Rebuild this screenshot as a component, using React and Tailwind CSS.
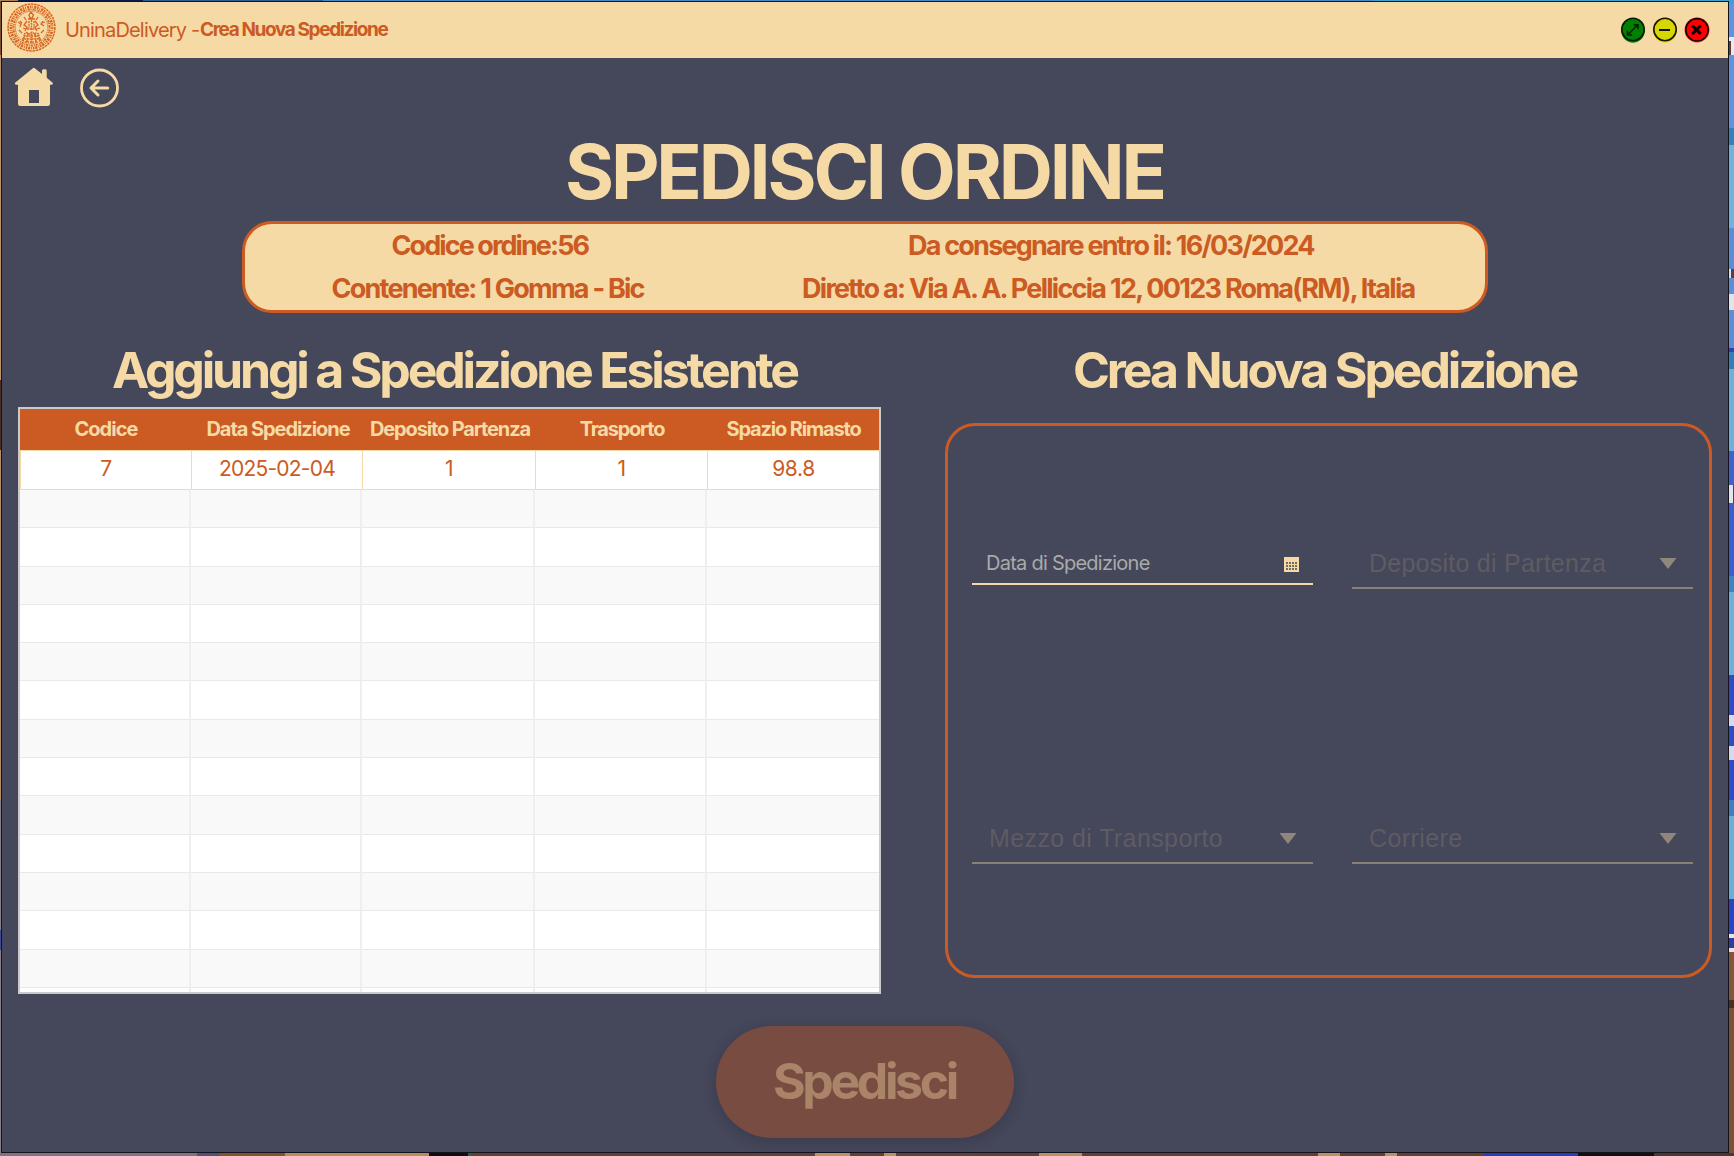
import React from "react";

const columns = ["Codice", "Data Spedizione", "Deposito Partenza", "Trasporto", "Spazio Rimasto"];
const headTracking = [
  "tracking-[-0.95px]",
  "tracking-[-1.06px]",
  "tracking-[-1.15px]",
  "tracking-[-1.23px]",
  "tracking-[-1.17px]",
];
const values = ["7", "2025-02-04", "1", "1", "98.8"];

function Seal() {
  return (
    <svg className="h-[49px] w-[49px]" viewBox="0 0 49 49" fill="none" stroke="#d9641f">
      <circle cx="24.5" cy="24.5" r="23.4" strokeWidth="1.5" strokeDasharray="2.6 0.7" />
      <circle cx="24.5" cy="24.5" r="20.6" strokeWidth="2.8" strokeDasharray="1.5 0.9 0.8 1.1 2.2 0.8" />
      <circle cx="24.5" cy="24.5" r="18" strokeWidth="2" strokeDasharray="1 1.1 2.1 0.7" />
      <circle cx="24.5" cy="24.5" r="16.2" strokeWidth="0.9" strokeDasharray="1.6 0.7" />
      <g strokeWidth="1.3">
        <path d="M22 12l2-3 2.500 3-1.500 3h-2zM21 16h7M20 18l-3 4 3 2-2 4M28 18l3 4-3 2 2 4" />
        <path d="M22 18v7M24.500 17v10M27 18v7M20 26h9M19 29l3 2 3-2 3 2 2-2" strokeDasharray="2 0.7" />
        <path d="M16 38l2-8M20 39l1-9M24.500 40V30M29 39l-1-9M33 38l-2-8" strokeDasharray="1.800 0.6" strokeWidth="1.900" />
        <path d="M15 36h19M17 33h15M18 39h13" strokeDasharray="1.500 1" />
        <path d="M11 19l3 2-1 3M13 18l2 2M36 18l-2 3 3 2M38 19l-3 1M12 27l3 3M37 27l-3 3" />
        <path d="M17 14l2 3M31 14l-2 3M16 25l3 1M33 25l-3 1" />
      </g>
    </svg>
  );
}

function HomeIcon() {
  return (
    <svg className="h-[40px] w-[40px]" viewBox="0 0 40 40" fill="#f6daa6">
      <path
        fillRule="evenodd"
        d="M18.800 1.300a1.500 1.500 0 0 1 2 0L28 7V3.700q0-1.500 1.500-1.500h1.700q1.500 0 1.500 1.500v7l5.700 4.800q1 1 .2 1.800-.4.500-1.600.5H36v19q0 2.200-2.300 2.200H6.300Q4 39 4 36.800v-19H2.500Q.9 17.800.9 16.500q0-.6.8-1.200zM15 23v13h10V23z"
      />
    </svg>
  );
}

function BackIcon() {
  return (
    <svg className="h-[40px] w-[40px]" viewBox="0 0 40 40" fill="none" stroke="#f6daa6" strokeLinecap="round" strokeLinejoin="round">
      <circle cx="20.500" cy="20" r="18" strokeWidth="2.800" />
      <path d="M28.700 20H12.300M19 13l-7 7 7 7" strokeWidth="3" />
    </svg>
  );
}

function WindowButtons() {
  return (
    <div className="flex gap-[6px]">
      <svg className="h-[26px] w-[26px]" viewBox="0 0 26 26">
        <circle cx="13" cy="14" r="11.700" fill="#0a8a0a" />
        <circle cx="13" cy="12.500" r="11.200" fill="#008000" stroke="#041a04" strokeWidth="1.600" />
        <path d="M8 17.500L17.500 8M13.500 7.700H18V12M7.500 13.500V18H12" fill="none" stroke="#031d03" strokeWidth="1.500" />
      </svg>
      <svg className="h-[26px] w-[26px]" viewBox="0 0 26 26">
        <circle cx="13" cy="14" r="11.700" fill="#e4e200" />
        <circle cx="13" cy="12.500" r="11.200" fill="#d6d600" stroke="#151500" strokeWidth="1.600" />
        <path d="M7 13H18" fill="none" stroke="#111" strokeWidth="2" />
      </svg>
      <svg className="h-[26px] w-[26px]" viewBox="0 0 26 26">
        <circle cx="13" cy="13" r="12.500" fill="#ff3030" />
        <circle cx="13" cy="12.800" r="11.200" fill="#ff0000" stroke="#1a0000" strokeWidth="1.600" />
        <path d="M8.200 8.500l8.600 8.600M16.800 8.500l-8.600 8.600" fill="none" stroke="#120000" strokeWidth="3" />
      </svg>
    </div>
  );
}

function CalendarIcon() {
  return (
    <svg className="h-[15px] w-[15px]" viewBox="0 0 15 15">
      <path d="M0 0h15v15H0z" fill="#f6daa6" />
      <path d="M2 6h11M2 9h11M2 12h11" stroke="#45475a" strokeWidth="1.500" strokeDasharray="2 1" />
    </svg>
  );
}

function Combo({ label, tracking }) {
  return (
    <div className="flex h-[56px] w-[341px] items-start justify-between border-b-2 border-[#8a8078] pl-[17px] pr-[16px] pt-[18px]">
      <span className={"font-['Liberation_Sans',sans-serif] text-[25px] leading-none whitespace-nowrap text-[#5e5c63] " + tracking}>{label}</span>
      <svg className="mt-[7px] h-[11px] w-[18px]" viewBox="0 0 18 11">
        <path d="M0.500 0h17L9 11z" fill="#91867b" />
      </svg>
    </div>
  );
}

function DesktopEdge() {
  return (
    <div className="flex w-[5px] flex-col overflow-hidden">
      <div className="h-[3px] bg-[#3f9fd0]" />
      <div className="h-[33px] bg-[#5c94de]" />
      <div className="h-[4px] bg-[#e6ecf5]" />
      <div className="ml-[2px] h-[14px] bg-[#e6ecf5]" />
      <div className="h-[73px] bg-[#5c94de]" />
      <div className="h-[17px] bg-[#2f84bd]" />
      <div className="h-[83px] bg-[#6cb3de]" />
      <div className="h-[41px] bg-[#5a8ed6]" />
      <div className="h-[9px] w-[2px] bg-[#d9dfeb]" />
      <div className="h-[16px] bg-[#5a8ed6]" />
      <div className="h-[16px] bg-[#dfe5ef]" />
      <div className="h-[38px] bg-[#5a8ed6]" />
      <div className="h-[4px] bg-[#2c46b8]" />
      <div className="h-[17px] bg-[#2f80bb]" />
      <div className="h-[82px] bg-[#6ab1dc]" />
      <div className="h-[34px] bg-[#3e62cf]" />
      <div className="h-[18px] w-[4px] bg-[#dfe5ef]" />
      <div className="h-[73px] bg-[#3a5ecf]" />
      <div className="h-[16px] bg-[#3a85c4]" />
      <div className="h-[83px] bg-[#6ab1dc]" />
      <div className="h-[40px] bg-[#2b4bc9]" />
      <div className="h-[11px] bg-[#d5dbea]" />
      <div className="h-[20px] bg-[#2b4bc9]" />
      <div className="h-[14px] bg-[#d5dbea]" />
      <div className="h-[40px] bg-[#2b4bc9]" />
      <div className="h-[16px] bg-[#3a80c2]" />
      <div className="h-[83px] bg-[#66b0dc]" />
      <div className="h-[35px] bg-[#2646c6]" />
      <div className="h-[4px] bg-[#e3e4ec]" />
      <div className="h-[10px] bg-[#2a3f9f]" />
      <div className="h-[4px] bg-[#e3e4ec]" />
      <div className="h-[48px] bg-[#80593a]" />
      <div className="h-[8px] bg-[#453225]" />
      <div className="grow bg-[#795338]" />
    </div>
  );
}

export default function App() {
  return (
    <div className="flex h-[1156px] w-[1734px] flex-col overflow-hidden bg-[#5b4033] font-['Inter',sans-serif]">
      <div className="flex h-px shrink-0">
        <div className="w-[18px] bg-[#a8805c]" />
        <div className="w-[125px] bg-[#0c1c4c]" />
        <div className="w-[180px] bg-[#2d5f96]" />
        <div className="w-[1050px] bg-[#4a87c9]" />
        <div className="grow bg-[#3f9fd0]" />
      </div>
      <div className="flex h-[1152px] shrink-0">
        <div className="flex w-px flex-col">
          <div className="h-[54px] bg-[#7a5038]" />
          <div className="h-[325px] bg-[#c19468]" />
          <div className="h-[70px] bg-[#4a3020]" />
          <div className="h-[350px] bg-[#b88c64]" />
          <div className="h-[130px] bg-[#8b7c8c]" />
          <div className="h-[20px] bg-[#3f4c94]" />
          <div className="grow bg-[#8b7c8c]" />
        </div>
        <div className="flex w-[1728px] flex-col border border-[#14151c] bg-[#45475a]">
          <header className="flex h-[56px] shrink-0 justify-between bg-[#f6daa6] text-[#cb5b22]">
            <div className="flex items-start pl-[5px]">
              <div className="pt-px">
                <Seal />
              </div>
              <span className="ml-[9px] mt-[18px] w-[135px] whitespace-nowrap text-[20px] font-normal leading-none tracking-[-0.83px]">
                UninaDelivery -
              </span>
              <span className="mt-[18px] whitespace-nowrap text-[19px] font-bold leading-none tracking-[-1.38px]">
                Crea Nuova Spedizione
              </span>
            </div>
            <div className="pr-[18px] pt-[15px]">
              <WindowButtons />
            </div>
          </header>

          <nav className="flex h-[76px] shrink-0 gap-[25px] pl-[12px] pt-[9px]">
            <HomeIcon />
            <div className="pt-[1px]">
              <BackIcon />
            </div>
          </nav>

          <h1 className="h-[75px] shrink-0 whitespace-nowrap pl-[563px] text-[75px] font-bold leading-none tracking-[-3.2px] text-[#f6daa6]">
            SPEDISCI ORDINE
          </h1>

          <section className="ml-[240px] mt-[12px] flex h-[92px] w-[1246px] shrink-0 rounded-[30px] border-3 border-[#cb5b22] bg-[#f6daa6] text-[27px] font-bold leading-none whitespace-nowrap text-[#cb5b22]">
            <div className="flex w-[556px] flex-col gap-[16px] pt-[8px]">
              <p className="pl-[146.500px] tracking-[-1.91px]">Codice ordine:56</p>
              <p className="pl-[86.500px] tracking-[-1.76px]">Contenente: 1 Gomma - Bic</p>
            </div>
            <div className="flex flex-col gap-[16px] pt-[8px]">
              <p className="pl-[107px] tracking-[-1.78px]">Da consegnare entro il: 16/03/2024</p>
              <p className="pl-px tracking-[-1.72px]">Diretto a: Via A. A. Pelliccia 12, 00123 Roma(RM), Italia</p>
            </div>
          </section>

          <main className="flex h-[681px] shrink-0 pt-[32px]">
            <section className="w-[943px] pl-[16px]">
              <h2 className="whitespace-nowrap pl-[94px] text-[50px] font-bold leading-none tracking-[-3.2px] text-[#f6daa6]">
                Aggiungi a Spedizione Esistente
              </h2>
              <div className="mt-[12px] flex h-[587px] w-[863px] flex-col overflow-hidden border-2 border-[#cacaca] bg-white">
                <div className="grid h-[41px] shrink-0 grid-cols-[172px_172px_172px_172px_1fr] bg-[#cb5b22] pt-[10px] text-center text-[20px] font-bold leading-none text-[#f6daa6]">
                  {columns.map((c, i) => (
                    <span key={c} className={"whitespace-nowrap " + headTracking[i]}>{c}</span>
                  ))}
                </div>
                <div className="grid h-[40px] shrink-0 grid-cols-[171px_171px_173px_172px_1fr] border-y border-l border-[#f6daa6] text-center text-[21px] leading-none text-[#cb5b22]">
                  {values.map((v, i) => (
                    <span
                      key={i}
                      className={
                        "pt-[7px] " +
                        (i < 4 ? "border-r border-[#f6daa6] " : "") +
                        (i === 1 ? "tracking-[-0.8px]" : "tracking-[-0.4px]")
                      }
                    >
                      {v}
                    </span>
                  ))}
                </div>
                {Array.from({ length: 13 }, (_, r) => (
                  <div
                    key={r}
                    className={
                      "grid h-[38.300px] shrink-0 grid-cols-[171px_171px_173px_172px_1fr] " + (r % 2 === 0 ? "bg-[#f9f9f9]" : "bg-white")
                    }
                  >
                    {columns.map((c, i) => (
                      <div key={c} className={"border-b border-[#e9e9e9] " + (i < 4 ? "border-r-2 border-r-[#efefef]" : "")} />
                    ))}
                  </div>
                ))}
                <div className="grid grow grid-cols-[171px_171px_173px_172px_1fr]">
                  {columns.map((c, i) => (
                    <div key={c} className={"border-[#efefef] " + (i < 4 ? "border-r-2" : "")} />
                  ))}
                </div>
              </div>
            </section>

            <section>
              <h2 className="whitespace-nowrap pl-[128px] text-[50px] font-bold leading-none tracking-[-3.160px] text-[#f6daa6]">
                Crea Nuova Spedizione
              </h2>
              <div className="mt-[28px] grid h-[555px] w-[767px] grid-cols-[341px_341px] content-start gap-x-[39px] rounded-[30px] border-3 border-[#cb5b22] pl-[24px] pt-[107px]">
                <div className="flex h-[52px] w-[341px] items-start justify-between border-b-2 border-[#f6daa6] pl-[14px] pr-[14px] pt-[20px]">
                  <span className="whitespace-nowrap text-[20px] leading-none tracking-[-0.750px] text-[#a9aaab]">Data di Spedizione</span>
                  <div className="mt-[4px]">
                    <CalendarIcon />
                  </div>
                </div>
                <Combo label="Deposito di Partenza" tracking="tracking-[0.250px]" />
                <div className="pt-[219px]">
                  <Combo label="Mezzo di Transporto" tracking="tracking-[0.400px]" />
                </div>
                <div className="pt-[219px]">
                  <Combo label="Corriere" tracking="tracking-[0.400px]" />
                </div>
              </div>
            </section>
          </main>

          <button
            type="button"
            className="ml-[714px] mt-[32px] h-[112px] w-[298px] shrink-0 rounded-full bg-[#784c40] pb-[2px] pl-[57px] text-left text-[50px] font-bold leading-none tracking-[-3.4px] text-[#a98468] shadow-[0_3px_14px_rgba(20,20,30,0.22)]"
          >
            Spedisci
          </button>
        </div>
        <DesktopEdge />
      </div>
      <div className="flex h-[3px] shrink-0">
        <div className="w-[197px] bg-[#82717f]" />
        <div className="w-[22px] bg-[#50507a]" />
        <div className="w-[66px] bg-[#7d5437]" />
        <div className="w-[144px] bg-[#b98c60]" />
        <div className="w-[39px] bg-[#120e0e]" />
        <div className="w-[3px] bg-[#1c6650]" />
        <div className="w-[344px] bg-[#5f4236]" />
        <div className="w-[35px] bg-[#bb8e6c]" />
        <div className="w-[34px] bg-[#5f4236]" />
        <div className="w-[12px] bg-[#bb8e6c]" />
        <div className="w-[143px] bg-[#5f4236]" />
        <div className="w-[43px] bg-[#bb8e6c]" />
        <div className="w-[236px] bg-[#5f4236]" />
        <div className="w-[22px] bg-[#bb8e6c]" />
        <div className="w-[45px] bg-[#5f4236]" />
        <div className="w-[12px] bg-[#bb8e6c]" />
        <div className="w-[87px] bg-[#5f4236]" />
        <div className="w-[94px] bg-[#2040c0]" />
        <div className="w-[76px] bg-[#14100f]" />
        <div className="grow bg-[#4a392e]" />
      </div>
    </div>
  );
}
